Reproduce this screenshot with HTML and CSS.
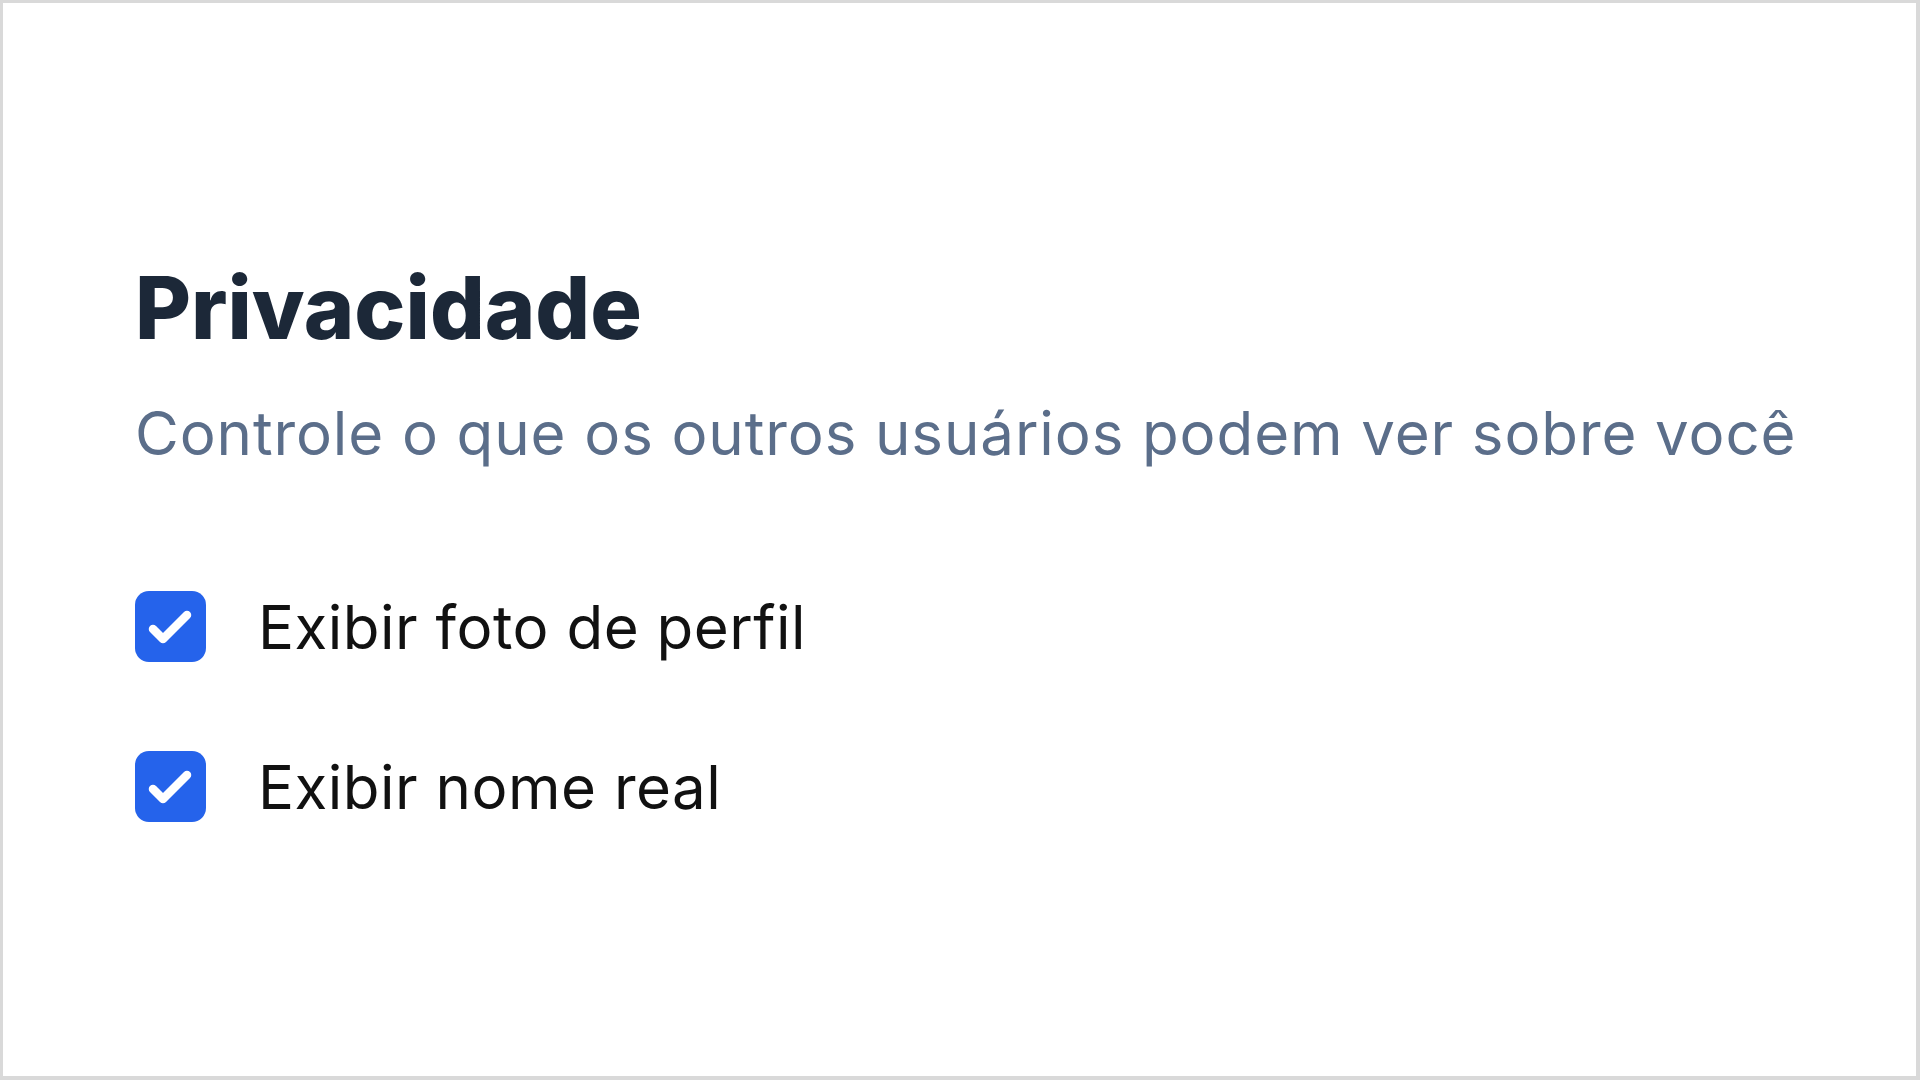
FILE: index.html
```html
<!DOCTYPE html>
<html lang="pt-BR">
<head>
<meta charset="utf-8">
<title>Privacidade</title>
<link rel="stylesheet" href="styles.css">
</head>
<body>
<main class="panel">
  <h1 class="title">Privacidade</h1>
  <p class="subtitle">Controle o que os outros usuários podem ver sobre você</p>
  <ul class="options">
    <li class="option">
      <span class="checkbox">
        <svg viewBox="0 0 71 71" width="71" height="71"><path d="M18 38 L28 48 L52 24" fill="none" stroke="#fff" stroke-width="8.5" stroke-linecap="round" stroke-linejoin="round"/></svg>
      </span>
      <span class="label">Exibir foto de perfil</span>
    </li>
    <li class="option">
      <span class="checkbox">
        <svg viewBox="0 0 71 71" width="71" height="71"><path d="M18 38 L28 48 L52 24" fill="none" stroke="#fff" stroke-width="8.5" stroke-linecap="round" stroke-linejoin="round"/></svg>
      </span>
      <span class="label">Exibir nome real</span>
    </li>
  </ul>
</main>
</body>
</html>
```

FILE: styles.css
```css
html, body {
  margin: 0;
  padding: 0;
  background: #ffffff;
}

.panel {
  box-sizing: border-box;
  width: 1920px;
  height: 1080px;
  border-style: solid;
  border-color: #d9d9d9;
  border-width: 3px 4px 4px 3px;
  padding: 253px 0 0 132px;
  display: flex;
  flex-direction: column;
  font-family: Inter, "Noto Sans", sans-serif;
}

.title {
  margin: 0;
  font-size: 86px;
  line-height: 104px;
  font-weight: 800;
  color: #1c2838;
  letter-spacing: 0;
}

.subtitle {
  margin: 37px 0 0 0;
  font-size: 60px;
  line-height: 72px;
  font-weight: 400;
  color: #5b6e8a;
  letter-spacing: 0.9px;
}

.options {
  list-style: none;
  margin: 122px 0 0 0;
  padding: 0;
  display: flex;
  flex-direction: column;
  gap: 89px;
}

.option {
  display: flex;
  align-items: center;
  gap: 52px;
  height: 71px;
}

.checkbox {
  width: 71px;
  height: 71px;
  border-radius: 14px;
  background: #2563eb;
  display: flex;
  flex-shrink: 0;
}

.label {
  font-size: 60px;
  line-height: 72px;
  color: #111111;
  font-weight: 400;
  letter-spacing: 0.5px;
}
```
